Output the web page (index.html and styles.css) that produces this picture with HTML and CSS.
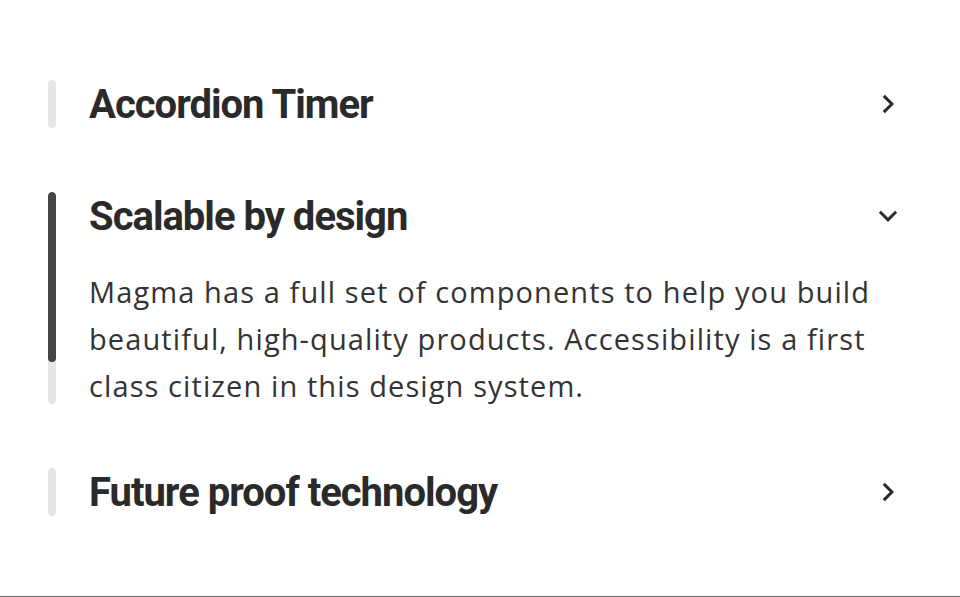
FILE: index.html
```html
<!DOCTYPE html>
<html lang="en">
<head>
<meta charset="utf-8">
<title>Accordion</title>
<link rel="stylesheet" href="styles.css">
</head>
<body>
<main class="page">
  <section class="accordion">
    <div class="item">
      <div class="track"></div>
      <div class="content">
        <button class="header" type="button">
          <span class="title">Accordion Timer</span>
          <svg class="chevron" viewBox="0 0 24 24" width="36" height="36" aria-hidden="true"><polyline points="9.2 6.6 14.6 12 9.2 17.4" fill="none" stroke="#2a2a2a" stroke-width="2" stroke-linejoin="miter"/></svg>
        </button>
      </div>
    </div>
    <div class="item open">
      <div class="track"><div class="fill" style="height: 80%"></div></div>
      <div class="content">
        <button class="header" type="button">
          <span class="title">Scalable by design</span>
          <svg class="chevron" viewBox="0 0 24 24" width="36" height="36" aria-hidden="true"><polyline points="6.6 9.2 12 14.6 17.4 9.2" fill="none" stroke="#2a2a2a" stroke-width="2" stroke-linejoin="miter"/></svg>
        </button>
        <p class="body">Magma has a full set of components to help you build beautiful, high-quality products. Accessibility is a first class citizen in this design system.</p>
      </div>
    </div>
    <div class="item">
      <div class="track"></div>
      <div class="content">
        <button class="header" type="button">
          <span class="title">Future proof technology</span>
          <svg class="chevron" viewBox="0 0 24 24" width="36" height="36" aria-hidden="true"><polyline points="9.2 6.6 14.6 12 9.2 17.4" fill="none" stroke="#2a2a2a" stroke-width="2" stroke-linejoin="miter"/></svg>
        </button>
      </div>
    </div>
  </section>
</main>
</body>
</html>
```
FILE: styles.css
```css
* { box-sizing: border-box; }
html, body { margin: 0; padding: 0; background: #fff; }
.page {
  min-height: 100vh;
  padding: 80px 48px 48px;
  border-bottom: 1px solid #666;
}
.accordion {
  display: flex;
  flex-direction: column;
  gap: 64px;
}
.item {
  display: flex;
  gap: 33px;
}
.track {
  width: 8px;
  flex: none;
  background: #e6e6e6;
  border-radius: 4px;
  overflow: hidden;
}
.fill {
  background: #454545;
  border-radius: 4px;
}
.content {
  flex: 1;
  display: flex;
  flex-direction: column;
  gap: 28px;
}
.header {
  display: flex;
  align-items: center;
  justify-content: space-between;
  height: 48px;
  padding: 0;
  border: 0;
  background: none;
  cursor: pointer;
  text-align: left;
}
.title {
  font-family: Roboto, "Liberation Sans", sans-serif;
  font-weight: 700;
  font-size: 40px;
  letter-spacing: -1px;
  color: #2a2a2a;
}
.chevron { flex: none; margin-right: 6px; }
.body {
  margin: 0 0 -5px;
  font-family: "Open Sans", Lato, sans-serif;
  font-size: 29px;
  line-height: 47px;
  letter-spacing: 1.1px;
  color: #333;
}
```
